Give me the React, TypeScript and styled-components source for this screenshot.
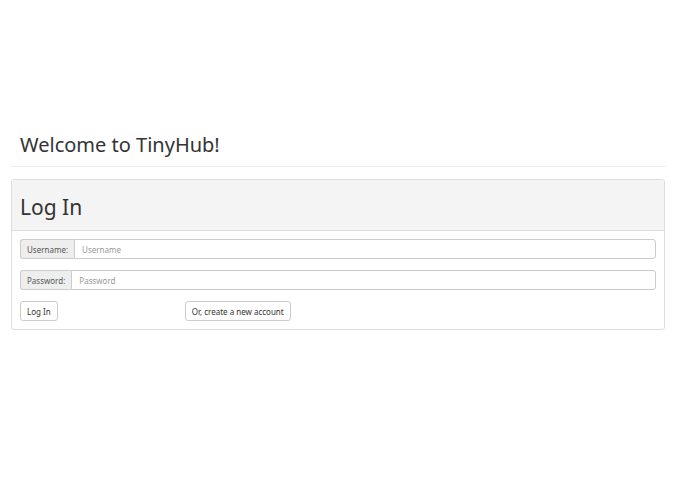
import styled, { createGlobalStyle } from "styled-components"

const GlobalStyle = createGlobalStyle`
  html, body {
    margin: 0;
    padding: 0;
    background: #fff;
  }
  body {
    font-family: "Noto Sans", "Open Sans", "DejaVu Sans", sans-serif;
    color: #333;
  }
`

const Page = styled.div`
  width: 656px;
  padding: 131px 0 0 10px;
`

const PageHeader = styled.div`
  border-bottom: 1px solid #eee;
  padding: 0 0 7px 10px;
  margin-bottom: 12px;
`

const Title = styled.h1`
  margin: 0;
  font-size: 20px;
  font-weight: 400;
  line-height: 28px;
  color: #333;
`

const Panel = styled.div`
  margin: 0 1px;
  border: 1px solid #ddd;
  border-radius: 3px;
  background: #fff;
`

const PanelHeading = styled.div`
  background: #f4f4f4;
  border-bottom: 1px solid #ddd;
  border-radius: 3px 3px 0 0;
  height: 51px;
  box-sizing: border-box;
  display: flex;
  align-items: center;
  padding: 3px 8px 0;
`

const PanelTitle = styled.h2`
  margin: 0;
  font-size: 21px;
  font-weight: 400;
  color: #333;
`

const PanelBody = styled.form`
  padding: 8px;
  display: flex;
  flex-direction: column;
  gap: 11px;
`

const InputGroup = styled.div`
  display: flex;
  height: 20px;
`

const Addon = styled.label`
  display: flex;
  align-items: center;
  padding: 0 6px;
  background: #eee;
  border: 1px solid #ccc;
  border-right: none;
  border-radius: 3px 0 0 3px;
  font-size: 8px;
  color: #555;
`

const Field = styled.input`
  flex: 1;
  min-width: 0;
  height: 100%;
  box-sizing: border-box;
  border: 1px solid #ccc;
  border-radius: 0 3px 3px 0;
  padding: 0 7px;
  font-family: inherit;
  font-size: 8px;
  color: #555;
  outline: none;
  &::placeholder {
    color: #999;
  }
`

const Actions = styled.div`
  display: flex;
  align-items: center;
`

const Button = styled.button<{ $offset?: number }>`
  height: 20px;
  padding: 0 6px;
  margin-left: ${p => p.$offset ?? 0}px;
  background: #fff;
  border: 1px solid #ccc;
  border-radius: 3px;
  font-family: inherit;
  font-size: 8px;
  color: #333;
  cursor: pointer;
`

export default function App() {
  return (
    <>
      <GlobalStyle />
      <Page>
        <PageHeader>
          <Title>Welcome to TinyHub!</Title>
        </PageHeader>
        <Panel>
          <PanelHeading>
            <PanelTitle>Log In</PanelTitle>
          </PanelHeading>
          <PanelBody onSubmit={e => e.preventDefault()}>
            <InputGroup>
              <Addon htmlFor="username">Username:</Addon>
              <Field id="username" type="text" placeholder="Username" />
            </InputGroup>
            <InputGroup>
              <Addon htmlFor="password">Password:</Addon>
              <Field id="password" type="password" placeholder="Password" />
            </InputGroup>
            <Actions>
              <Button type="submit">Log In</Button>
              <Button type="button" $offset={127}>Or, create a new account</Button>
            </Actions>
          </PanelBody>
        </Panel>
      </Page>
    </>
  )
}
